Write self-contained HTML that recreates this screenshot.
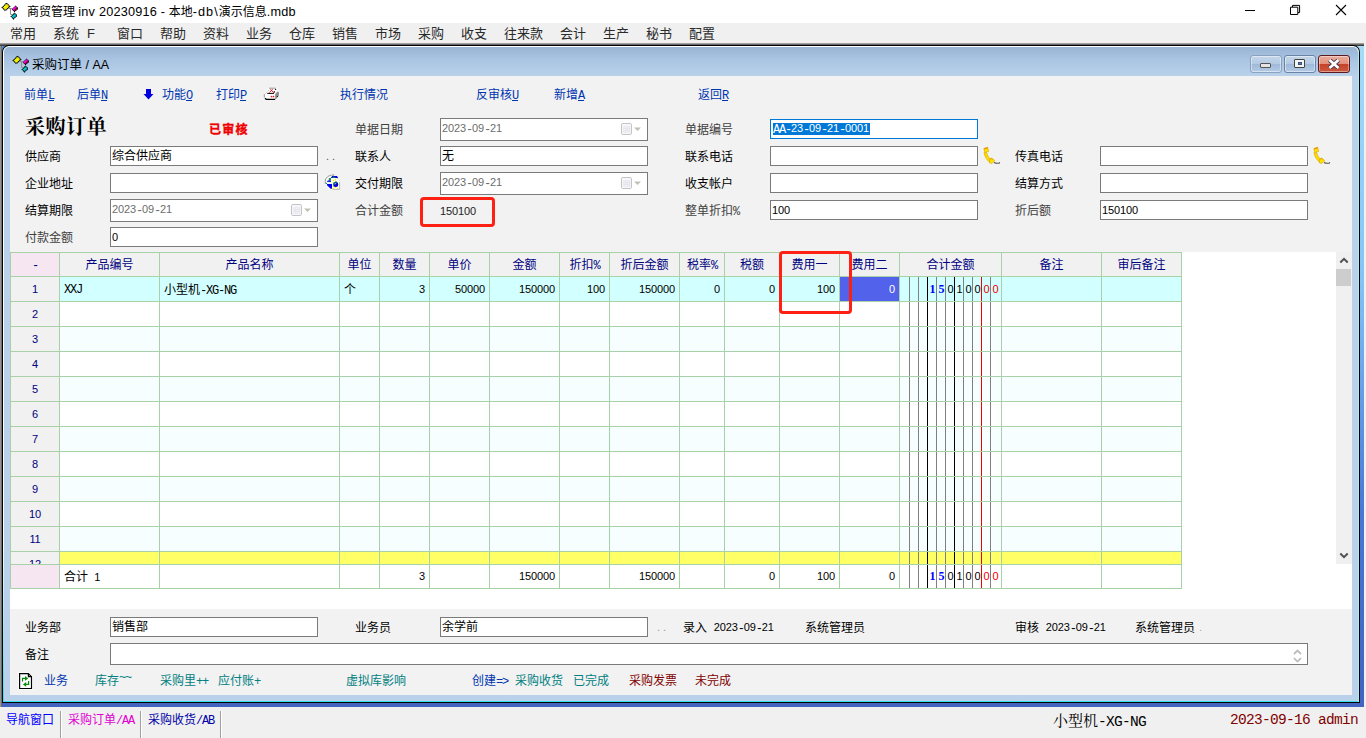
<!DOCTYPE html>
<html lang="zh-CN"><head><meta charset="utf-8"><title>商贸管理 inv 20230916</title>
<style>
*{box-sizing:border-box;margin:0;padding:0}
html,body{width:1366px;height:738px;overflow:hidden}
body{position:relative;background:#f0f0f0;font-family:"Liberation Sans","Noto Sans CJK SC",sans-serif;font-size:12px;color:#000;line-height:14px}
.a{position:absolute;white-space:nowrap}
.t{position:absolute;white-space:nowrap;height:14px;line-height:14px;margin-top:1px}
.n{font-size:11px;letter-spacing:-0.12px}
.i{position:relative;top:-1px}
.c{font-family:'Liberation Mono',monospace;font-size:12px;letter-spacing:-1.2px}
.hy{display:inline-block;width:6px;text-align:center;font-family:'Liberation Mono',monospace;font-size:12px;letter-spacing:0}
.lnk{color:#0035b0}
.L{font-size:12.7px;letter-spacing:.2px}
.teal{color:#008080}
.dred{color:#800000}
.inp{position:absolute;background:#fff;border:1px solid #7a7a7a;height:20px}
.inp>span{position:absolute;left:1px;top:2px;white-space:nowrap}
.hd{position:absolute;color:#000080;text-align:center;height:14px;line-height:14px;white-space:nowrap}
.num{position:absolute;text-align:right;font-size:11px;letter-spacing:-0.12px;height:14px;line-height:14px;white-space:nowrap}
.vl{position:absolute;width:1px;background:#a8d1a8}
.hl{position:absolute;height:1px;background:#a8d1a8}
.menu span{position:absolute;top:25.5px;font-size:13px;line-height:16px;color:#2a2a2a;white-space:nowrap}
u{text-decoration:underline}
</style></head>
<body>
<div class="a" style="left:0;top:0;width:1366px;height:23px;background:#fff"></div>
<div class="a" style="left:27px;top:4px;font-size:12px;line-height:16px;color:#000">商贸管理 <span class="L">inv 20230916 - </span>本地<span class="L" style="letter-spacing:1px">-db\</span>演示信息<span class="L">.mdb</span></div>
<svg class="a" style="left:0px;top:0px" width="20" height="21" viewBox="0 0 20 21"><path d="M8.5 8.5 H12.5 M10.5 8.5 V14.5 H12.5" fill="none" stroke="#909090" stroke-width="1"/><polygon points="6.5,3.2 9.8,6.5 5.4,10.6 2.1,7.5" fill="#f0f000" stroke="#000" stroke-width="1.1" stroke-dasharray="1.3 0.5"/><polygon points="15.5,6.2 17.9,8.5 14.5,11.6 12.4,9.4" fill="#b00040" stroke="#000" stroke-width="1.1" stroke-dasharray="1.3 0.5"/><polygon points="15.5,6.2 16.7,7.35 13.45,10.5 12.4,9.4" fill="#ff00ff"/><polygon points="14.5,13.2 16.9,15.6 13.5,18.9 11.1,16.4" fill="#00c8d0" stroke="#000" stroke-width="1.1" stroke-dasharray="1.3 0.5"/></svg>
<svg class="a" style="left:1240px;top:0" width="126" height="23" viewBox="0 0 126 23"><path d="M5 10.5 H15" stroke="#000" stroke-width="1" fill="none"/><path d="M50.5 7.2 H57.8 V14.5 H50.5 Z M52.5 7.2 V5.4 H59.6 V12.6 H57.8" stroke="#000" stroke-width="1" fill="none"/><path d="M96 5 L106 15 M106 5 L96 15" stroke="#000" stroke-width="1.1" fill="none"/></svg>
<div class="menu"><span style="left:10px">常用</span><span style="left:53px">系统</span><span style="left:87px">F</span><span style="left:117px">窗口</span><span style="left:160px">帮助</span><span style="left:203px">资料</span><span style="left:246px">业务</span><span style="left:289px">仓库</span><span style="left:332px">销售</span><span style="left:375px">市场</span><span style="left:418px">采购</span><span style="left:461px">收支</span><span style="left:504px">往来款</span><span style="left:560px">会计</span><span style="left:603px">生产</span><span style="left:646px">秘书</span><span style="left:689px">配置</span></div>
<div class="a" style="left:0;top:43px;width:1364px;height:3px;background:linear-gradient(#b8b8b8,#6a6a6a 50%,#2a2a2a)"></div>
<div class="a" style="left:0;top:46px;width:2px;height:661px;background:linear-gradient(to right,#a8a8a8,#5a5a5a)"></div>
<div class="a" style="left:2px;top:46px;width:1362px;height:661px;background:linear-gradient(#a6dcf8 0,#86c4f6 35%,#4a78d6 70%,#4363bf 100%)"></div>
<div class="a" style="left:2px;top:46px;width:6px;height:6px;background:#4a8ee0"></div>
<div class="a" style="left:2px;top:45px;width:1358px;height:658px;background:#000;border-radius:7px 7px 0 0"></div>
<div class="a" style="left:3px;top:46px;width:1356px;height:656px;background:linear-gradient(#fff 0,#fff 75%,#35e0f0 100%);border-radius:6px 6px 0 0"></div>
<div class="a" style="left:4px;top:47px;width:1354px;height:654px;background:linear-gradient(#98b4d4 0,#a9c4e2 12px,#b9d1ea 29px,#b9d1ea 100%);border-radius:5px 5px 0 0"></div>
<div class="a" style="left:1358px;top:52px;width:1px;height:650px;background:#a4ecf8"></div>
<div class="a" style="left:10px;top:76px;width:1342px;height:619px;background:#f2f2f2"></div>
<svg class="a" style="left:11px;top:53px" width="20" height="21" viewBox="0 0 20 21"><path d="M8.5 8.5 H12.5 M10.5 8.5 V14.5 H12.5" fill="none" stroke="#909090" stroke-width="1"/><polygon points="6.5,3.2 9.8,6.5 5.4,10.6 2.1,7.5" fill="#f0f000" stroke="#000" stroke-width="1.1" stroke-dasharray="1.3 0.5"/><polygon points="15.5,6.2 17.9,8.5 14.5,11.6 12.4,9.4" fill="#b00040" stroke="#000" stroke-width="1.1" stroke-dasharray="1.3 0.5"/><polygon points="15.5,6.2 16.7,7.35 13.45,10.5 12.4,9.4" fill="#ff00ff"/><polygon points="14.5,13.2 16.9,15.6 13.5,18.9 11.1,16.4" fill="#00c8d0" stroke="#000" stroke-width="1.1" stroke-dasharray="1.3 0.5"/></svg>
<div class="a" style="left:32px;top:57px;font-size:12.5px;line-height:16px;color:#000">采购订单 / AA</div>
<div class="a" style="left:1250px;top:55px;width:32px;height:18px;border:1px solid #8aa2c0;border-radius:3px;background:linear-gradient(#c4d6ea 0,#b4cae4 48%,#9fb9d8 52%,#b3cbe6 100%);box-shadow:inset 0 0 0 1px rgba(255,255,255,.45)"><div class="a" style="left:9px;top:7px;width:11px;height:5px;border:1px solid #555;border-radius:1px;background:#e4e4e4"></div></div>
<div class="a" style="left:1284px;top:55px;width:32px;height:18px;border:1px solid #6a84a8;border-radius:3px;background:linear-gradient(#c4d6ea 0,#b4cae4 48%,#9fb9d8 52%,#b3cbe6 100%);box-shadow:inset 0 0 0 1px rgba(255,255,255,.45)"><div class="a" style="left:9px;top:3px;width:11px;height:9px;border:1px solid #444;border-radius:1px;background:#f4f4f4"><div class="a" style="left:3px;top:2px;width:3px;height:3px;background:#5a78a8;border:1px solid #3a5078;box-sizing:content-box;width:2px;height:1px"></div></div></div>
<div class="a" style="left:1318px;top:55px;width:32px;height:18px;border:1px solid #5a1a20;border-radius:3px;background:linear-gradient(#ebab9c 0,#e2907e 48%,#c4432a 52%,#cc583e 100%);box-shadow:inset 0 0 0 1px rgba(255,255,255,.4)"><svg class="a" style="left:9px;top:3px" width="12" height="10" viewBox="0 0 12 10"><path d="M1.5 1 L10.5 9 M10.5 1 L1.5 9" stroke="#3a3a50" stroke-width="4.4" fill="none"/><path d="M1.5 1 L10.5 9 M10.5 1 L1.5 9" stroke="#fff" stroke-width="2.7" fill="none"/></svg></div>
<div class="t lnk" style="left:24px;top:87px;">前单<u class="c">L</u></div>
<div class="t lnk" style="left:77px;top:87px;">后单<u class="c">N</u></div>
<svg class="a" style="left:143px;top:89px" width="11" height="11" viewBox="0 0 11 11"><path d="M3 0 H8 V5 H10.5 L5.5 10.5 L0.5 5 H3 Z" fill="#0000e0"/></svg>
<div class="t lnk" style="left:162px;top:87px;">功能<u class="c">O</u></div>
<div class="t lnk" style="left:216px;top:87px;">打印<u class="c">P</u></div>
<svg class="a" style="left:263px;top:87px" width="17" height="14" viewBox="0 0 17 14"><path d="M1 6.8 L5.8 0.8 H13.2 L16.4 4.8 V9 L13 13 H3 L0.8 10.8 Z" fill="#fff"/><path d="M6 1.2 H12.7" stroke="#8a8a8a" stroke-width="0.9" fill="none"/><path d="M5.8 3.2 L2.3 6.4" stroke="#9a9a9a" stroke-width="0.9" stroke-dasharray="1.2 0.8" fill="none"/><circle cx="12.6" cy="2.4" r="0.65" fill="#000"/><path d="M11.5 4.3 L10.9 5.8" stroke="#000" stroke-width="1.1" fill="none"/><path d="M6.4 5.6 L9.6 2.3 M7.5 2.3 L10.6 5.6" stroke="#f01010" stroke-width="1" fill="none"/><path d="M4.3 6.4 H10.9" stroke="#000" stroke-width="1" fill="none"/><path d="M12.2 7 L14.5 4.4 Q16 4.4 16 5.6 L15.8 8.7 L13.2 11.9 L12.2 11.9 Z" fill="#8e8e8e"/><path d="M1.3 7 V10.6" stroke="#8a8a8a" stroke-width="0.9" fill="none"/><path d="M2 11.2 L3.3 12.3 H12.2" stroke="#000" stroke-width="1.3" fill="none"/><circle cx="8.5" cy="9.5" r="0.85" fill="#f01010"/><circle cx="10.5" cy="9.5" r="0.85" fill="#f01010"/><circle cx="14.4" cy="9.5" r="0.6" fill="#000"/></svg>
<div class="t lnk" style="left:340px;top:87px;">执行情况</div>
<div class="t lnk" style="left:476px;top:87px;">反审核<u class="c">U</u></div>
<div class="t lnk" style="left:554px;top:87px;">新增<u class="c">A</u></div>
<div class="t lnk" style="left:698px;top:87px;">返回<u class="c">R</u></div>
<div class="a" style="left:25px;top:113px;font-family:'Liberation Serif','Noto Serif CJK SC',serif;font-weight:700;font-size:20px;line-height:28px;letter-spacing:0.6px;color:#000">采购订单</div>
<div class="t" style="left:209px;top:122px;font-weight:700;color:#f00000;-webkit-text-stroke:0.35px #f00000;letter-spacing:1.2px">已审核</div>
<div class="t" style="left:25px;top:149px;">供应商</div>
<div class="inp" style="left:110px;top:146px;width:208px;height:20px;"><span class="">综合供应商</span></div>
<div class="t" style="left:25px;top:176px;">企业地址</div>
<div class="inp" style="left:110px;top:173px;width:208px;height:20px;"></div>
<div class="t" style="left:25px;top:203px;">结算期限</div>
<div class="inp" style="left:110px;top:199px;width:208px;height:23px"><span style="left:1px;top:3px;color:#6d6d6d"><span class="n i">2023</span><span class="hy">-</span><span class="n i">09</span><span class="hy">-</span><span class="n i">21</span></span><svg class="a" style="left:180px;top:4px" width="22" height="13" viewBox="0 0 22 13"><rect x="0.5" y="0.5" width="10" height="11" rx="1.3" fill="#f5f7fd" stroke="#c9c2c2"/><rect x="2.4" y="3.4" width="6.8" height="6.2" fill="#e2e3e8"/><g fill="#fff"><rect x="3.3" y="4.2" width="1" height="1"/><rect x="5.3" y="4.2" width="1" height="1"/><rect x="7.3" y="4.2" width="1" height="1"/><rect x="3.3" y="6.2" width="1" height="1"/><rect x="5.3" y="6.2" width="1" height="1"/><rect x="7.3" y="6.2" width="1" height="1"/><rect x="3.3" y="8.2" width="1" height="1"/><rect x="5.3" y="8.2" width="1" height="1"/><rect x="7.3" y="8.2" width="1" height="1"/></g><path d="M13 4.5 H20 L16.5 8 Z" fill="#c0c0b8"/></svg></div>
<div class="t" style="left:25px;top:230px;color:#404040;">付款金额</div>
<div class="inp" style="left:110px;top:227px;width:208px;height:20px;"><span class="n">0</span></div>
<div class="t" style="left:326px;top:148px;color:#555;letter-spacing:3px;font-size:11px">..</div>
<svg class="a" style="left:324px;top:174px" width="17" height="17" viewBox="0 0 17 17"><circle cx="8.5" cy="8.5" r="7.6" fill="#fbfbfb"/><path d="M1.3 9.6 V6.8 Q1.8 3.6 4.6 2.1 Q7 0.9 10.8 1.1" fill="none" stroke="#6e6e6e" stroke-width="0.9" stroke-dasharray="2 0.5"/><path d="M13.3 4.8 L15.7 6.6" fill="none" stroke="#6e6e6e" stroke-width="0.9"/><path d="M6.9 3.6 L8.3 2 H12.9 L14 3.6 L13.6 4.1 H7.3 Z" fill="#0000f0"/><path d="M8.7 3.3 L9.6 2.3 L10.5 3.3 L11.5 2.8 L11.5 3.9 H8.7 Z" fill="#108030"/><rect x="4.8" y="4.1" width="2.2" height="1.9" fill="#109040"/><path d="M3 7.1 L5 6.2 H6.9 V8 H3.5 Z" fill="#0000f0"/><rect x="4.3" y="7.2" width="1" height="0.9" fill="#109040"/><rect x="6" y="7.4" width="0.9" height="0.8" fill="#109040"/><circle cx="2.4" cy="9.4" r="0.6" fill="#008888"/><path d="M3 10.1 H8.2 V14.7 H6.6 L3 11.2 Z" fill="#0000f0"/><rect x="8.2" y="5.2" width="7.4" height="10.2" fill="#fff"/><path d="M15.6 8 V15.4 H8.4" fill="none" stroke="#b4b4b4" stroke-width="0.9"/><g fill="#f4f000"><circle cx="9.4" cy="6.4" r="0.7"/><circle cx="11.5" cy="5.4" r="0.7"/><circle cx="11.5" cy="7.3" r="0.7"/><circle cx="9.3" cy="8.4" r="0.6"/><circle cx="9.4" cy="12.4" r="0.7"/><circle cx="11.5" cy="13.5" r="0.7"/><circle cx="9.4" cy="14.4" r="0.7"/><circle cx="13.6" cy="14.4" r="0.7"/></g><circle cx="11.7" cy="10.4" r="2.5" fill="#0000c8"/><path d="M9.4 11 Q9 8.2 11.8 7.9 Q13 7.9 13.6 8.6" fill="none" stroke="#008888" stroke-width="1"/><path d="M10.6 9.2 H12.4 L10.8 10.8 Z" fill="#fff"/><path d="M11.2 10.4 L12.6 9.1" stroke="#108030" stroke-width="0.7"/></svg>
<div class="t" style="left:355px;top:122px;color:#404040;">单据日期</div>
<div class="inp" style="left:440px;top:118px;width:208px;height:23px"><span style="left:1px;top:3px;color:#6d6d6d"><span class="n i">2023</span><span class="hy">-</span><span class="n i">09</span><span class="hy">-</span><span class="n i">21</span></span><svg class="a" style="left:180px;top:4px" width="22" height="13" viewBox="0 0 22 13"><rect x="0.5" y="0.5" width="10" height="11" rx="1.3" fill="#f5f7fd" stroke="#c9c2c2"/><rect x="2.4" y="3.4" width="6.8" height="6.2" fill="#e2e3e8"/><g fill="#fff"><rect x="3.3" y="4.2" width="1" height="1"/><rect x="5.3" y="4.2" width="1" height="1"/><rect x="7.3" y="4.2" width="1" height="1"/><rect x="3.3" y="6.2" width="1" height="1"/><rect x="5.3" y="6.2" width="1" height="1"/><rect x="7.3" y="6.2" width="1" height="1"/><rect x="3.3" y="8.2" width="1" height="1"/><rect x="5.3" y="8.2" width="1" height="1"/><rect x="7.3" y="8.2" width="1" height="1"/></g><path d="M13 4.5 H20 L16.5 8 Z" fill="#c0c0b8"/></svg></div>
<div class="t" style="left:355px;top:149px;">联系人</div>
<div class="inp" style="left:440px;top:146px;width:208px;height:20px;"><span class="">无</span></div>
<div class="t" style="left:355px;top:176px;">交付期限</div>
<div class="inp" style="left:440px;top:172px;width:208px;height:23px"><span style="left:1px;top:3px;color:#6d6d6d"><span class="n i">2023</span><span class="hy">-</span><span class="n i">09</span><span class="hy">-</span><span class="n i">21</span></span><svg class="a" style="left:180px;top:4px" width="22" height="13" viewBox="0 0 22 13"><rect x="0.5" y="0.5" width="10" height="11" rx="1.3" fill="#f5f7fd" stroke="#c9c2c2"/><rect x="2.4" y="3.4" width="6.8" height="6.2" fill="#e2e3e8"/><g fill="#fff"><rect x="3.3" y="4.2" width="1" height="1"/><rect x="5.3" y="4.2" width="1" height="1"/><rect x="7.3" y="4.2" width="1" height="1"/><rect x="3.3" y="6.2" width="1" height="1"/><rect x="5.3" y="6.2" width="1" height="1"/><rect x="7.3" y="6.2" width="1" height="1"/><rect x="3.3" y="8.2" width="1" height="1"/><rect x="5.3" y="8.2" width="1" height="1"/><rect x="7.3" y="8.2" width="1" height="1"/></g><path d="M13 4.5 H20 L16.5 8 Z" fill="#c0c0b8"/></svg></div>
<div class="t" style="left:355px;top:203px;color:#404040;">合计金额</div>
<div class="t n" style="left:440px;top:203px;color:#222">150100</div>
<div class="t" style="left:685px;top:122px;color:#404040;">单据编号</div>
<div class="inp" style="left:770px;top:119px;width:208px;height:20px;border-color:#0078d7"><span style="left:2px;background:#0078d7;color:#fff;padding:0 1px 0 0;height:12px;line-height:12px;top:3px"><span class="c">AA</span><span class="hy">-</span><span class="n i">23</span><span class="hy">-</span><span class="n i">09</span><span class="hy">-</span><span class="n i">21</span><span class="hy">-</span><span class="n i">0001</span></span></div>
<div class="t" style="left:685px;top:149px;">联系电话</div>
<div class="inp" style="left:770px;top:146px;width:208px;height:20px;"></div>
<div class="t" style="left:685px;top:176px;">收支帐户</div>
<div class="inp" style="left:770px;top:173px;width:208px;height:20px;"></div>
<div class="t" style="left:685px;top:203px;color:#404040;">整单折扣<span class="c">%</span></div>
<div class="inp" style="left:770px;top:200px;width:208px;height:20px;"><span class="n">100</span></div>
<div class="t" style="left:1015px;top:149px;">传真电话</div>
<div class="inp" style="left:1100px;top:146px;width:208px;height:20px;"></div>
<div class="t" style="left:1015px;top:176px;">结算方式</div>
<div class="inp" style="left:1100px;top:173px;width:208px;height:20px;"></div>
<div class="t" style="left:1015px;top:203px;color:#404040;">折后额</div>
<div class="inp" style="left:1100px;top:200px;width:208px;height:20px;"><span class="n">150100</span></div>
<svg class="a" style="left:982px;top:146px" width="19" height="19" viewBox="0 0 19 19"><path d="M11.9 16.5 Q14 17.6 17.2 17.2 L17.8 16.2" fill="none" stroke="#585858" stroke-width="1.1"/><path d="M1.9 6.8 L4.6 6.6 Q5.6 10.5 8.6 13.6 L7.6 16.6 Q3 12.6 1.9 6.8Z" fill="#ffdc00" stroke="#c8a000" stroke-width="0.5"/><path d="M1.9 2.4 L5.7 1.1 L6.6 5.5 L2.6 6.6 Z" fill="#ffe000" stroke="#d8a800" stroke-width="0.6"/><path d="M2 2.5 L5.6 1.3 L5.8 2.2 L2.2 3.4 Z" fill="#f08020"/><path d="M7.4 13.1 L9.7 12.1 L12.9 14.6 L9.7 17.6 L7.6 16.9 Z" fill="#ffe000" stroke="#d8a800" stroke-width="0.6"/><path d="M8 13.3 L9.6 12.6 L10.6 13.4" fill="none" stroke="#e08818" stroke-width="0.7"/></svg>
<svg class="a" style="left:1312px;top:146px" width="19" height="19" viewBox="0 0 19 19"><path d="M11.9 16.5 Q14 17.6 17.2 17.2 L17.8 16.2" fill="none" stroke="#585858" stroke-width="1.1"/><path d="M1.9 6.8 L4.6 6.6 Q5.6 10.5 8.6 13.6 L7.6 16.6 Q3 12.6 1.9 6.8Z" fill="#ffdc00" stroke="#c8a000" stroke-width="0.5"/><path d="M1.9 2.4 L5.7 1.1 L6.6 5.5 L2.6 6.6 Z" fill="#ffe000" stroke="#d8a800" stroke-width="0.6"/><path d="M2 2.5 L5.6 1.3 L5.8 2.2 L2.2 3.4 Z" fill="#f08020"/><path d="M7.4 13.1 L9.7 12.1 L12.9 14.6 L9.7 17.6 L7.6 16.9 Z" fill="#ffe000" stroke="#d8a800" stroke-width="0.6"/><path d="M8 13.3 L9.6 12.6 L10.6 13.4" fill="none" stroke="#e08818" stroke-width="0.7"/></svg>
<div class="a" style="left:420px;top:197px;width:75px;height:30px;border:3px solid #ff2014;border-radius:4px"></div>
<div class="a" style="left:10px;top:252px;width:1342px;height:357px;background:#fff"></div>
<div class="a" style="left:10px;top:252px;width:1171px;height:24px;background:#f1f1f1"></div>
<div class="a" style="left:10px;top:276px;width:49px;height:288px;background:#f1f1f1"></div>
<div class="a" style="left:10px;top:252px;width:49px;height:24px;background:#f6e6f2"></div>
<div class="a" style="left:10px;top:564px;width:49px;height:24px;background:#f6e6f2"></div>
<div class="a" style="left:59px;top:276px;width:1122px;height:25px;background:#d2ffff"></div>
<div class="a" style="left:59px;top:326px;width:1122px;height:25px;background:#f6feff"></div>
<div class="a" style="left:59px;top:376px;width:1122px;height:25px;background:#f6feff"></div>
<div class="a" style="left:59px;top:426px;width:1122px;height:25px;background:#f6feff"></div>
<div class="a" style="left:59px;top:476px;width:1122px;height:25px;background:#f6feff"></div>
<div class="a" style="left:59px;top:526px;width:1122px;height:25px;background:#f6feff"></div>
<div class="a" style="left:59px;top:551px;width:1122px;height:13px;background:#ffff66"></div>
<div class="a" style="left:840px;top:277px;width:59px;height:24px;background:#5262ea"></div>
<div class="a" style="left:909px;top:277px;width:1px;height:311px;background:#808080"></div>
<div class="a" style="left:918px;top:277px;width:1px;height:311px;background:#808080"></div>
<div class="a" style="left:927px;top:277px;width:1px;height:311px;background:#000"></div>
<div class="a" style="left:936px;top:277px;width:1px;height:311px;background:#808080"></div>
<div class="a" style="left:945px;top:277px;width:1px;height:311px;background:#808080"></div>
<div class="a" style="left:954px;top:277px;width:1px;height:311px;background:#000"></div>
<div class="a" style="left:963px;top:277px;width:1px;height:311px;background:#808080"></div>
<div class="a" style="left:972px;top:277px;width:1px;height:311px;background:#808080"></div>
<div class="a" style="left:981px;top:277px;width:1px;height:311px;background:#f00000"></div>
<div class="a" style="left:990px;top:277px;width:1px;height:311px;background:#808080"></div>
<div class="hl" style="left:10px;top:252px;width:1172px"></div>
<div class="hl" style="left:10px;top:276px;width:1172px"></div>
<div class="hl" style="left:10px;top:301px;width:1172px"></div>
<div class="hl" style="left:10px;top:326px;width:1172px"></div>
<div class="hl" style="left:10px;top:351px;width:1172px"></div>
<div class="hl" style="left:10px;top:376px;width:1172px"></div>
<div class="hl" style="left:10px;top:401px;width:1172px"></div>
<div class="hl" style="left:10px;top:426px;width:1172px"></div>
<div class="hl" style="left:10px;top:451px;width:1172px"></div>
<div class="hl" style="left:10px;top:476px;width:1172px"></div>
<div class="hl" style="left:10px;top:501px;width:1172px"></div>
<div class="hl" style="left:10px;top:526px;width:1172px"></div>
<div class="hl" style="left:10px;top:551px;width:1172px"></div>
<div class="hl" style="left:10px;top:564px;width:1172px"></div>
<div class="hl" style="left:10px;top:588px;width:1172px"></div>
<div class="vl" style="left:10px;top:252px;height:337px"></div>
<div class="vl" style="left:59px;top:252px;height:337px"></div>
<div class="vl" style="left:159px;top:252px;height:337px"></div>
<div class="vl" style="left:339px;top:252px;height:337px"></div>
<div class="vl" style="left:379px;top:252px;height:337px"></div>
<div class="vl" style="left:429px;top:252px;height:337px"></div>
<div class="vl" style="left:489px;top:252px;height:337px"></div>
<div class="vl" style="left:559px;top:252px;height:337px"></div>
<div class="vl" style="left:609px;top:252px;height:337px"></div>
<div class="vl" style="left:679px;top:252px;height:337px"></div>
<div class="vl" style="left:724px;top:252px;height:337px"></div>
<div class="vl" style="left:779px;top:252px;height:337px"></div>
<div class="vl" style="left:839px;top:252px;height:337px"></div>
<div class="vl" style="left:899px;top:252px;height:337px"></div>
<div class="vl" style="left:1001px;top:252px;height:337px"></div>
<div class="vl" style="left:1101px;top:252px;height:337px"></div>
<div class="vl" style="left:1181px;top:252px;height:337px"></div>
<div class="hd" style="left:11px;top:258px;width:48px"><span class="hy">-</span></div>
<div class="hd" style="left:60px;top:258px;width:99px">产品编号</div>
<div class="hd" style="left:160px;top:258px;width:179px">产品名称</div>
<div class="hd" style="left:340px;top:258px;width:39px">单位</div>
<div class="hd" style="left:380px;top:258px;width:49px">数量</div>
<div class="hd" style="left:430px;top:258px;width:59px">单价</div>
<div class="hd" style="left:490px;top:258px;width:69px">金额</div>
<div class="hd" style="left:560px;top:258px;width:49px">折扣<span class="c">%</span></div>
<div class="hd" style="left:610px;top:258px;width:69px">折后金额</div>
<div class="hd" style="left:680px;top:258px;width:44px">税率<span class="c">%</span></div>
<div class="hd" style="left:725px;top:258px;width:54px">税额</div>
<div class="hd" style="left:780px;top:258px;width:59px">费用一</div>
<div class="hd" style="left:840px;top:258px;width:59px">费用二</div>
<div class="hd" style="left:900px;top:258px;width:101px">合计金额</div>
<div class="hd" style="left:1002px;top:258px;width:99px">备注</div>
<div class="hd" style="left:1102px;top:258px;width:79px">审后备注</div>
<div class="hd n" style="left:11px;top:282px;width:48px">1</div>
<div class="hd n" style="left:11px;top:307px;width:48px">2</div>
<div class="hd n" style="left:11px;top:332px;width:48px">3</div>
<div class="hd n" style="left:11px;top:357px;width:48px">4</div>
<div class="hd n" style="left:11px;top:382px;width:48px">5</div>
<div class="hd n" style="left:11px;top:407px;width:48px">6</div>
<div class="hd n" style="left:11px;top:432px;width:48px">7</div>
<div class="hd n" style="left:11px;top:457px;width:48px">8</div>
<div class="hd n" style="left:11px;top:482px;width:48px">9</div>
<div class="hd n" style="left:11px;top:507px;width:48px">10</div>
<div class="hd n" style="left:11px;top:532px;width:48px">11</div>
<div class="a" style="left:11px;top:552px;width:48px;height:12px;overflow:hidden"><div class="hd n" style="left:0;top:5px;width:48px">12</div></div>
<div class="t c" style="left:64px;top:282px;">XXJ</div>
<div class="t " style="left:164px;top:282px;">小型机<span class="hy">-</span><span class="c">XG</span><span class="hy">-</span><span class="c">NG</span></div>
<div class="t " style="left:344px;top:282px;">个</div>
<div class="num" style="left:380px;top:282px;width:45px;">3</div>
<div class="num" style="left:430px;top:282px;width:55px;">50000</div>
<div class="num" style="left:490px;top:282px;width:65px;">150000</div>
<div class="num" style="left:560px;top:282px;width:45px;">100</div>
<div class="num" style="left:610px;top:282px;width:65px;">150000</div>
<div class="num" style="left:680px;top:282px;width:40px;">0</div>
<div class="num" style="left:725px;top:282px;width:50px;">0</div>
<div class="num" style="left:780px;top:282px;width:55px;">100</div>
<div class="num" style="left:840px;top:282px;width:55px;color:#fff">0</div>
<div class="hd" style="left:928px;top:282px;width:9px;color:#0000ff;font-size:11px;font-weight:700;font-family:'Liberation Serif',serif;font-size:12px;">1</div>
<div class="hd" style="left:937px;top:282px;width:9px;color:#0000ff;font-size:11px;font-weight:700;font-family:'Liberation Serif',serif;font-size:12px;">5</div>
<div class="hd" style="left:946px;top:282px;width:9px;color:#000;font-size:11px;">0</div>
<div class="hd" style="left:955px;top:282px;width:9px;color:#000;font-size:11px;">1</div>
<div class="hd" style="left:964px;top:282px;width:9px;color:#000;font-size:11px;">0</div>
<div class="hd" style="left:973px;top:282px;width:9px;color:#000;font-size:11px;">0</div>
<div class="hd" style="left:982px;top:282px;width:9px;color:#f00000;font-size:11px;">0</div>
<div class="hd" style="left:991px;top:282px;width:9px;color:#f00000;font-size:11px;">0</div>
<div class="t " style="left:64px;top:569px;">合计&nbsp;<span class="n">&nbsp;1</span></div>
<div class="num" style="left:380px;top:569px;width:45px;">3</div>
<div class="num" style="left:490px;top:569px;width:65px;">150000</div>
<div class="num" style="left:610px;top:569px;width:65px;">150000</div>
<div class="num" style="left:725px;top:569px;width:50px;">0</div>
<div class="num" style="left:780px;top:569px;width:55px;">100</div>
<div class="num" style="left:840px;top:569px;width:55px;">0</div>
<div class="hd" style="left:928px;top:569px;width:9px;color:#0000ff;font-size:11px;font-weight:700;font-family:'Liberation Serif',serif;font-size:12px;">1</div>
<div class="hd" style="left:937px;top:569px;width:9px;color:#0000ff;font-size:11px;font-weight:700;font-family:'Liberation Serif',serif;font-size:12px;">5</div>
<div class="hd" style="left:946px;top:569px;width:9px;color:#000;font-size:11px;">0</div>
<div class="hd" style="left:955px;top:569px;width:9px;color:#000;font-size:11px;">1</div>
<div class="hd" style="left:964px;top:569px;width:9px;color:#000;font-size:11px;">0</div>
<div class="hd" style="left:973px;top:569px;width:9px;color:#000;font-size:11px;">0</div>
<div class="hd" style="left:982px;top:569px;width:9px;color:#f00000;font-size:11px;">0</div>
<div class="hd" style="left:991px;top:569px;width:9px;color:#f00000;font-size:11px;">0</div>
<div class="a" style="left:1336px;top:252px;width:16px;height:312px;background:#f0f0f0"></div>
<div class="a" style="left:1336px;top:269px;width:15px;height:17px;background:#cdcdcd"></div>
<svg class="a" style="left:1339px;top:256px" width="10" height="8" viewBox="0 0 10 8"><path d="M1.3 6.5 L5 2.8 L8.7 6.5" fill="none" stroke="#505050" stroke-width="2"/></svg>
<svg class="a" style="left:1339px;top:552px" width="10" height="8" viewBox="0 0 10 8"><path d="M1.3 1.5 L5 5.2 L8.7 1.5" fill="none" stroke="#505050" stroke-width="2"/></svg>
<div class="a" style="left:779px;top:251px;width:73px;height:63px;border:3px solid #ff2014;border-radius:4px"></div>
<div class="t " style="left:25px;top:620px;">业务部</div>
<div class="inp" style="left:110px;top:617px;width:208px;height:20px"><span>销售部</span></div>
<div class="t " style="left:355px;top:620px;">业务员</div>
<div class="inp" style="left:440px;top:617px;width:208px;height:20px"><span>余学前</span></div>
<div class="t n" style="left:657px;top:619px;color:#999;letter-spacing:3px">..</div>
<div class="t " style="left:683px;top:620px;">录入&nbsp;&nbsp;<span class="n i">2023</span><span class="hy">-</span><span class="n i">09</span><span class="hy">-</span><span class="n i">21</span></div>
<div class="t " style="left:805px;top:620px;">系统管理员</div>
<div class="t " style="left:1015px;top:620px;">审核&nbsp;&nbsp;<span class="n i">2023</span><span class="hy">-</span><span class="n i">09</span><span class="hy">-</span><span class="n i">21</span></div>
<div class="t " style="left:1135px;top:620px;">系统管理员</div>
<div class="t n" style="left:1199px;top:619px;color:#aaa">.</div>
<div class="t " style="left:25px;top:647px;">备注</div>
<div class="inp" style="left:110px;top:643px;width:1198px;height:22px"></div>
<svg class="a" style="left:1293px;top:646px" width="9" height="18" viewBox="0 0 9 18"><path d="M1 8 L4.5 4.6 L8 8" fill="none" stroke="#bdbdbd" stroke-width="1.8"/><path d="M1 12.2 L4.5 15.6 L8 12.2" fill="none" stroke="#bdbdbd" stroke-width="1.8"/></svg>
<svg class="a" style="left:18px;top:672px" width="16" height="18" viewBox="0 0 16 18"><path d="M1.6 1.6 H10.4 L13.5 4.7 V16.5 H1.6 Z" fill="#fff" stroke="#fff" stroke-width="2.6"/><path d="M1.6 1.6 H10.4 L13.5 4.7 V16.5 H1.6 Z" fill="#fff" stroke="#000" stroke-width="1.2"/><path d="M10.4 1.6 V4.7 H13.5" fill="none" stroke="#000" stroke-width="1.2"/><path d="M4.5 9.6 V6.4 H8" fill="none" stroke="#0a8a0a" stroke-width="1.2"/><path d="M7 3.9 L10.2 6.4 L7 8.8 Z" fill="#0a8a0a"/><path d="M10.6 9 V12.4 H7.5" fill="none" stroke="#0a8a0a" stroke-width="1.2"/><path d="M8.2 9.9 L4.9 12.4 L8.2 14.8 Z" fill="#0a8a0a"/></svg>
<div class="t lnk" style="left:44px;top:673px;">业务</div>
<div class="t teal" style="left:95px;top:673px;">库存<span class="c" style="position:relative;top:-4px">~~</span></div>
<div class="t teal" style="left:160px;top:673px;">采购里<span class="c">++</span></div>
<div class="t teal" style="left:218px;top:673px;">应付账<span class="c">+</span></div>
<div class="t teal" style="left:346px;top:673px;">虚拟库影响</div>
<div class="t lnk" style="left:472px;top:673px;">创建<span class="c">=&gt;</span></div>
<div class="t teal" style="left:515px;top:673px;">采购收货</div>
<div class="t teal" style="left:573px;top:673px;">已完成</div>
<div class="t dred" style="left:629px;top:673px;">采购发票</div>
<div class="t dred" style="left:695px;top:673px;">未完成</div>
<div class="t " style="left:6px;top:712px;color:#0000ff">导航窗口</div>
<div class="t " style="left:68px;top:712px;color:#e000d0">采购订单<span class="c">/AA</span></div>
<div class="t " style="left:148px;top:712px;color:#0000a8">采购收货<span class="c">/AB</span></div>
<div class="a" style="left:60px;top:711px;width:1px;height:27px;background:#a0a0a0"></div>
<div class="a" style="left:61px;top:711px;width:1px;height:27px;background:#fff"></div>
<div class="a" style="left:140px;top:711px;width:1px;height:27px;background:#a0a0a0"></div>
<div class="a" style="left:141px;top:711px;width:1px;height:27px;background:#fff"></div>
<div class="a" style="left:220px;top:711px;width:1px;height:27px;background:#a0a0a0"></div>
<div class="a" style="left:221px;top:711px;width:1px;height:27px;background:#fff"></div>
<div class="a" style="left:1053px;top:712px;font-size:15px;line-height:18px;color:#000;font-family:'Liberation Serif','Noto Serif CJK SC',serif">小型机<span style="font-family:'Liberation Mono',monospace;font-size:14.5px;letter-spacing:-0.7px">-XG-NG</span></div>
<div class="a" style="left:1230px;top:711px;font-size:14.5px;letter-spacing:-0.7px;line-height:18px;color:#800000;font-family:'Liberation Mono',monospace">2023-09-16 admin</div>
</body></html>
